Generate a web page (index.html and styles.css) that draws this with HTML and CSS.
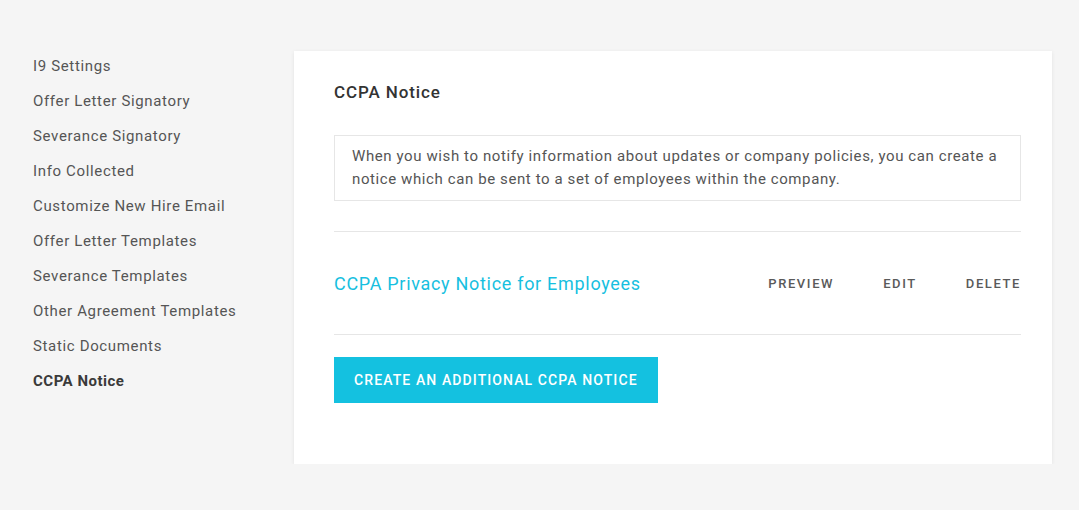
FILE: index.html
```html
<!DOCTYPE html>
<html>
<head>
<meta charset="utf-8">
<link rel="stylesheet" href="styles.css">
</head>
<body>
<div class="page">
  <nav class="sidebar">
    <a class="nav-item">I9 Settings</a>
    <a class="nav-item">Offer Letter Signatory</a>
    <a class="nav-item">Severance Signatory</a>
    <a class="nav-item">Info Collected</a>
    <a class="nav-item">Customize New Hire Email</a>
    <a class="nav-item">Offer Letter Templates</a>
    <a class="nav-item">Severance Templates</a>
    <a class="nav-item">Other Agreement Templates</a>
    <a class="nav-item">Static Documents</a>
    <a class="nav-item active">CCPA Notice</a>
  </nav>
  <main class="card">
    <h2 class="title">CCPA Notice</h2>
    <div class="info">When you wish to notify information about updates or company policies, you can create a notice which can be sent to a set of employees within the company.</div>
    <div class="notice-row">
      <a class="notice-link">CCPA Privacy Notice for Employees</a>
      <div class="actions">
        <a class="action">PREVIEW</a>
        <a class="action">EDIT</a>
        <a class="action">DELETE</a>
      </div>
    </div>
    <button class="btn">CREATE AN ADDITIONAL CCPA NOTICE</button>
  </main>
</div>
</body>
</html>
```
FILE: styles.css
```css
html, body {
  margin: 0;
  padding: 0;
  background: #f5f5f5;
  font-family: "Roboto", "Liberation Sans", sans-serif;
}
* { box-sizing: border-box; }
.page {
  display: flex;
  align-items: flex-start;
  padding: 49px 0 0 33px;
}
.sidebar {
  width: 261px;
  flex-shrink: 0;
  display: flex;
  flex-direction: column;
}
.nav-item {
  font-size: 15px;
  line-height: 35px;
  color: #555;
  letter-spacing: 0.65px;
}
.nav-item.active {
  font-weight: 700;
  color: #3a3a3a;
  letter-spacing: 0.5px;
}
.card {
  margin-top: 2px;
  width: 758px;
  flex-shrink: 0;
  background: #fff;
  padding: 27px 31px 61px 40px;
  box-shadow: 0 1px 4px rgba(0,0,0,0.08);
}
.title {
  margin: 0;
  font-size: 17px;
  font-weight: 500;
  color: #333;
  line-height: 28px;
  letter-spacing: 0.9px;
}
.info {
  margin-top: 29px;
  border: 1px solid #e6e6e6;
  padding: 9px 17px 9px 17px;
  font-size: 15px;
  line-height: 23px;
  color: #555;
  letter-spacing: 0.6px;
}
.notice-row {
  margin-top: 30px;
  border-top: 1px solid #e6e6e6;
  border-bottom: 1px solid #e6e6e6;
  height: 104px;
  display: flex;
  align-items: center;
  justify-content: space-between;
}
.notice-link {
  font-size: 18px;
  color: #17bfe0;
  letter-spacing: 0.7px;
}
.actions {
  display: flex;
  gap: 49px;
}
.action {
  font-size: 13px;
  font-weight: 500;
  color: #5a5a5a;
  letter-spacing: 1.6px;
}
.btn {
  display: block;
  margin-top: 22px;
  height: 46px;
  padding: 0 20px;
  background: #14c1e0;
  border: none;
  color: #fff;
  font-family: inherit;
  font-size: 14px;
  font-weight: 500;
  letter-spacing: 1.1px;
}
```
